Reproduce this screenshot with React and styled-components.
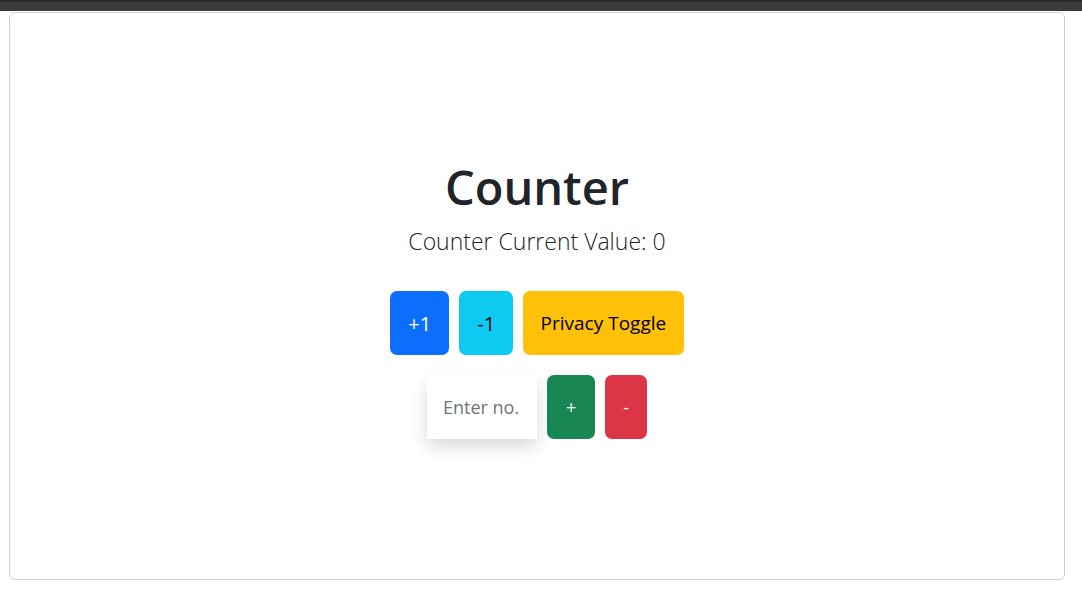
import React, { useState } from "react";
import styled, { createGlobalStyle } from "styled-components";

const Global = createGlobalStyle`
  html, body { margin: 0; padding: 0; background: #fff; }
  body { font-family: "Open Sans", "Noto Sans", sans-serif; color: #212529; }
  * { box-sizing: border-box; }
`;

const Page = styled.div`
  width: 1082px;
  height: 596px;
  display: flex;
  flex-direction: column;
`;

const TopBar = styled.div`
  height: 11px;
  background: #3a3a3a;
  border-top: 2px solid #2b2b2b;
  flex: none;
`;

const Frame = styled.div`
  padding: 1px 17px 16px 9px;
  flex: 1;
  display: flex;
`;

const Card = styled.div`
  flex: 1;
  border: 1px solid #d0d0d0;
  border-radius: 6px;
  display: flex;
  flex-direction: column;
  align-items: center;
  padding-top: 146px;
`;

const Title = styled.h1`
  margin: 0;
  font-size: 47px;
  font-weight: 600;
  line-height: 56px;
  color: #212529;
`;

const Subtitle = styled.p`
  margin: 10px 0 0;
  font-size: 23px;
  font-weight: 300;
  line-height: 33px;
  color: #212529;
`;

const Row = styled.div`
  display: flex;
  gap: 10px;
  margin-top: ${(p) => p.$top}px;
`;

const Btn = styled.button`
  height: 64px;
  padding: 0 ${(p) => p.$px || 16}px;
  border: none;
  border-radius: 7px;
  font-family: "Open Sans", "Noto Sans", sans-serif;
  font-size: ${(p) => p.$fs || 20}px;
  background: ${(p) => p.$bg};
  color: ${(p) => p.$fg};
  cursor: pointer;
`;

const NumInput = styled.input`
  width: 110px;
  height: 64px;
  border: none;
  outline: none;
  padding: 0 16px;
  font-family: "Open Sans", "Noto Sans", sans-serif;
  font-size: 18px;
  color: #212529;
  box-shadow: 0 8px 16px rgba(0, 0, 0, 0.15);
  &::placeholder { color: #6c757d; }
`;

export default function App() {
  const [count, setCount] = useState(0);
  const [hidden, setHidden] = useState(false);
  const [val, setVal] = useState("");
  const n = Number(val) || 0;
  return (
    <Page>
      <Global />
      <TopBar />
      <Frame>
        <Card>
          <Title>Counter</Title>
          <Subtitle>Counter Current Value: {hidden ? "***" : count}</Subtitle>
          <Row $top={33}>
            <Btn $bg="#0d6efd" $fg="#fff" $px={18} onClick={() => setCount(count + 1)}>+1</Btn>
            <Btn $bg="#0dcaf0" $fg="#000" $px={18} onClick={() => setCount(count - 1)}>-1</Btn>
            <Btn $bg="#ffc107" $fg="#000" $fs={19} $px={17.5} onClick={() => setHidden(!hidden)}>Privacy Toggle</Btn>
          </Row>
          <Row $top={20}>
            <NumInput placeholder="Enter no." value={val} onChange={(e) => setVal(e.target.value)} />
            <Btn $bg="#198754" $fg="#fff" $fs={18} $px={19} onClick={() => setCount(count + n)}>+</Btn>
            <Btn $bg="#dc3545" $fg="#fff" $fs={18} $px={18} onClick={() => setCount(count - n)}>-</Btn>
          </Row>
        </Card>
      </Frame>
    </Page>
  );
}
